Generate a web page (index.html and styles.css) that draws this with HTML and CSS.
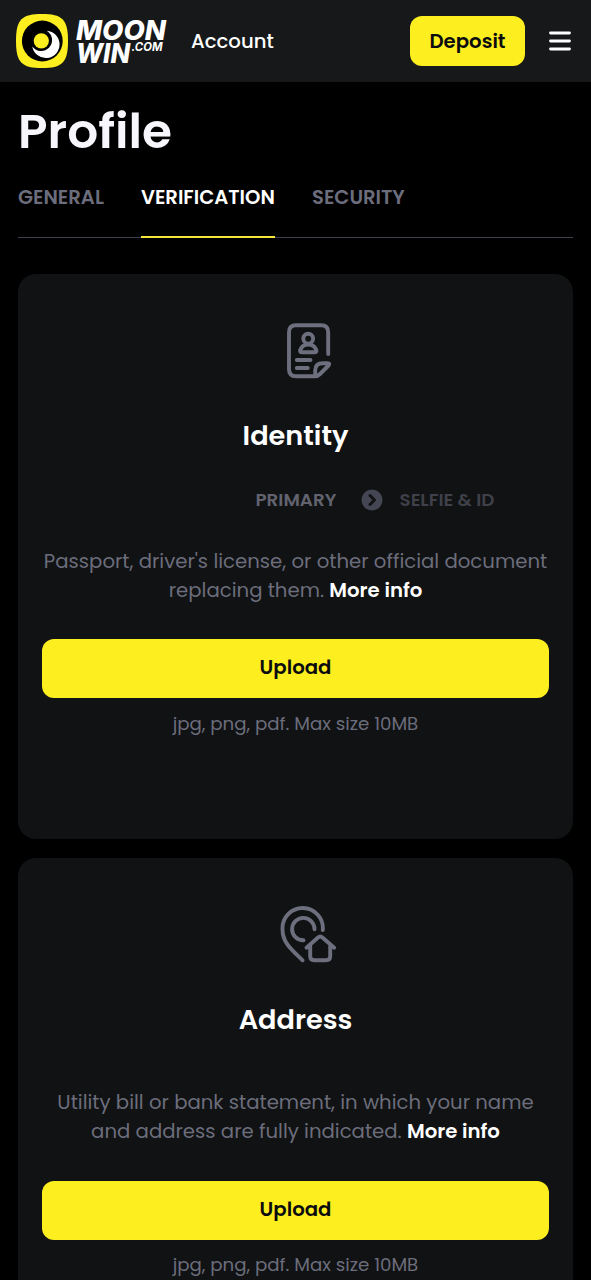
FILE: index.html
```html
<!DOCTYPE html>
<html lang="en">
<head>
<meta charset="utf-8">
<title>Profile – Verification</title>
<link rel="stylesheet" href="styles.css">
</head>
<body>
<header class="header">
  <a class="logo" aria-label="Moonwin.com">
    <svg class="logo-mark" viewBox="0 0 52 54" width="52" height="54">
      <path d="M26 0C46 0 52 5 52 27S46 54 26 54 0 49 0 27 6 0 26 0Z" fill="#fdee20"/>
      <circle cx="26.300" cy="27" r="20.400" fill="#000"/>
      <path d="M30.700 16.700A13.700 13.700 0 1 1 16.300 32.400A10.900 10.900 0 1 0 30.700 16.700Z" fill="#fff"/>
      <circle cx="25.300" cy="26.800" r="7.600" fill="#fdee20"/>
    </svg>
    <svg class="logo-text" viewBox="0 0 92 54" width="92" height="54">
      <text class="word" x="0" y="26" textLength="90" lengthAdjust="spacingAndGlyphs">MOON</text>
      <text class="word" x="0" y="48.700" textLength="54" lengthAdjust="spacingAndGlyphs">WIN</text>
      <text class="com" x="55.500" y="37" textLength="31" lengthAdjust="spacingAndGlyphs">.COM</text>
    </svg>
  </a>
  <span class="section">Account</span>
  <button class="btn deposit">Deposit</button>
  <svg class="menu" viewBox="0 0 22 20" width="22" height="20"><path d="M1.500 2h19M1.500 10h19M1.500 18h19"/></svg>
</header>
<main class="main">
  <h1 class="title">Profile</h1>
  <nav class="tabs">
    <a class="tab general">GENERAL</a>
    <a class="tab verification active">VERIFICATION</a>
    <a class="tab security">SECURITY</a>
  </nav>
  <section class="card">
    <svg class="icon" viewBox="0 0 60 60" width="60" height="60">
      <path d="M51.200 35V13.300Q51.200 6.300 44.200 6.300H19Q12 6.300 12 13.300V50.300Q12 57.300 19 57.300H38.200C40.500 57.300 41.500 56.500 43 55L51.500 46.500Q53.500 44.300 50.500 44.300H46Q38.200 44.300 38.200 51.500V57"/>
      <circle cx="31.200" cy="19.700" r="4.900"/>
      <path d="M25 33.300Q22.600 33.300 23.200 31C24.500 27.500 27 25.500 31.200 25.500S38 27.500 39.300 31Q39.900 33.300 37.500 33.300ZM19.800 41H33.500M19.800 49H30.800"/>
    </svg>
    <h2 class="card-title">Identity</h2>
    <div class="steps">
      <span class="step primary">PRIMARY</span>
      <svg class="chev" viewBox="0 0 22 22" width="22" height="22"><circle cx="11" cy="11" r="10.500"/><path d="M9 6.500L13.500 11L9 15.500"/></svg>
      <span class="step selfie">SELFIE &amp; ID</span>
    </div>
    <p class="desc">Passport, driver's license, or other official document<br>replacing them. <b class="more">More info</b></p>
    <button class="btn upload">Upload</button>
    <p class="hint">jpg, png, pdf. Max size 10MB</p>
  </section>
  <section class="card last">
    <svg class="icon" viewBox="0 0 60 60" width="60" height="60">
      <path d="M45.800 27A20.200 20.200 0 1 0 5.500 26.200C5.500 40 15 47 25.500 57.300"/>
      <path d="M37.500 26.300A11.200 11.200 0 1 0 26.500 37.300"/>
      <path d="M29.500 44.700L41 34.500Q43.200 32.500 45.400 34.500L57.200 44.700M33.200 43V53.300Q33.200 57.300 37.200 57.300H49.200Q53.200 57.300 53.200 53.300V43"/>
    </svg>
    <h2 class="card-title">Address</h2>
    <div class="steps"></div>
    <p class="desc second">Utility bill or bank statement, in which your name<br>and address are fully indicated. <b class="more">More info</b></p>
    <button class="btn upload">Upload</button>
    <p class="hint">jpg, png, pdf. Max size 10MB</p>
  </section>
</main>
</body>
</html>
```
FILE: styles.css
```css
* { box-sizing: border-box; }
body {
  margin: 0;
  height: 1280px;
  overflow: hidden;
  background: #000;
  color: #fff;
  font-family: Poppins, Inter, "Open Sans", sans-serif;
  font-size: 19.7px;
}
h1, h2, p { margin: 0; }
.header {
  display: flex;
  align-items: center;
  height: 82px;
  padding: 0 20px 0 16px;
  background: #161819;
}
.logo { display: flex; gap: 8px; }
.logo-mark, .logo-text { display: block; }
.logo-text { overflow: visible; }
.word { font: italic 800 27px Inter, sans-serif; fill: #fff; }
.com { font: italic 700 12px Inter, sans-serif; fill: #fff; }
.section {
  margin-left: 23px;
  font-weight: 500;
}
.btn {
  border: 0;
  padding: 0;
  background: #fdee20;
  color: #0b0c0d;
  font-family: inherit;
  font-size: 19.7px;
  font-weight: 600;
}
.deposit {
  width: 115px;
  height: 50px;
  margin-left: auto;
  border-radius: 12px;
}
.menu {
  margin-left: 24px;
  fill: none;
  stroke: #fff;
  stroke-width: 2.800;
  stroke-linecap: round;
}
.main { padding: 18px 18px 0; }
.title {
  height: 64px;
  line-height: 63px;
  font-size: 48.600px;
  font-weight: 600;
  color: #f6f6fc;
}
.tabs {
  display: flex;
  gap: 37px;
  height: 74px;
  margin-bottom: 36px;
  border-bottom: 1px solid #3f3f4d;
}
.tab {
  height: 74px;
  padding-top: 18px;
  line-height: 30px;
  font-size: 19.600px;
  font-weight: 600;
  color: #6c6d7c;
  white-space: nowrap;
}
.general { width: 86px; }
.verification { width: 134px; }
.active { color: #fff; border-bottom: 2px solid #f5e63a; }
.card {
  display: flex;
  flex-direction: column;
  align-items: center;
  height: 565px;
  margin-bottom: 19px;
  padding: 45px 24px 0;
  border-radius: 18px;
  background: #101213;
}
.last { height: 422px; margin-bottom: 0; border-radius: 18px 18px 0 0; }
.icon {
  flex: none;
  margin-left: 22px;
  fill: none;
  stroke: #6e6f7e;
  stroke-width: 3.900;
  stroke-linecap: round;
  stroke-linejoin: round;
}
.card-title {
  height: 40px;
  margin-top: 37px;
  line-height: 40px;
  font-size: 27.200px;
  font-weight: 600;
}
.steps {
  display: flex;
  align-items: center;
  align-self: flex-start;
  height: 30px;
  margin: 29px 0 0 213.500px;
}
.step { font-size: 18.300px; font-weight: 600; line-height: 26px; padding-bottom: 1px; color: #62636f; white-space: nowrap; }
.selfie { color: #3f4049; }
.primary { width: 105px; }
.chev { width: 22px; margin-right: 17px; fill: #454653; stroke: #101213; }
.chev circle { stroke: none; }
.chev path { fill: none; stroke-width: 3; stroke-linecap: round; stroke-linejoin: round; }
.desc {
  margin-top: 32px;
  line-height: 29px;
  text-align: center;
  white-space: nowrap;
  color: #6c6d7c;
}
.second { margin-top: -11px; }
.more { font-weight: 600; color: #fff; }
.upload {
  flex: none;
  width: 507px;
  height: 59px;
  margin-top: 34px;
  padding-bottom: 3px;
  border-radius: 12px;
}
.second + .upload { margin-top: 35px; }
.hint {
  margin-top: 11px;
  line-height: 30px;
  font-size: 18.200px;
  color: #6c6d7c;
}
.last .hint { margin-top: 10px; }
```
